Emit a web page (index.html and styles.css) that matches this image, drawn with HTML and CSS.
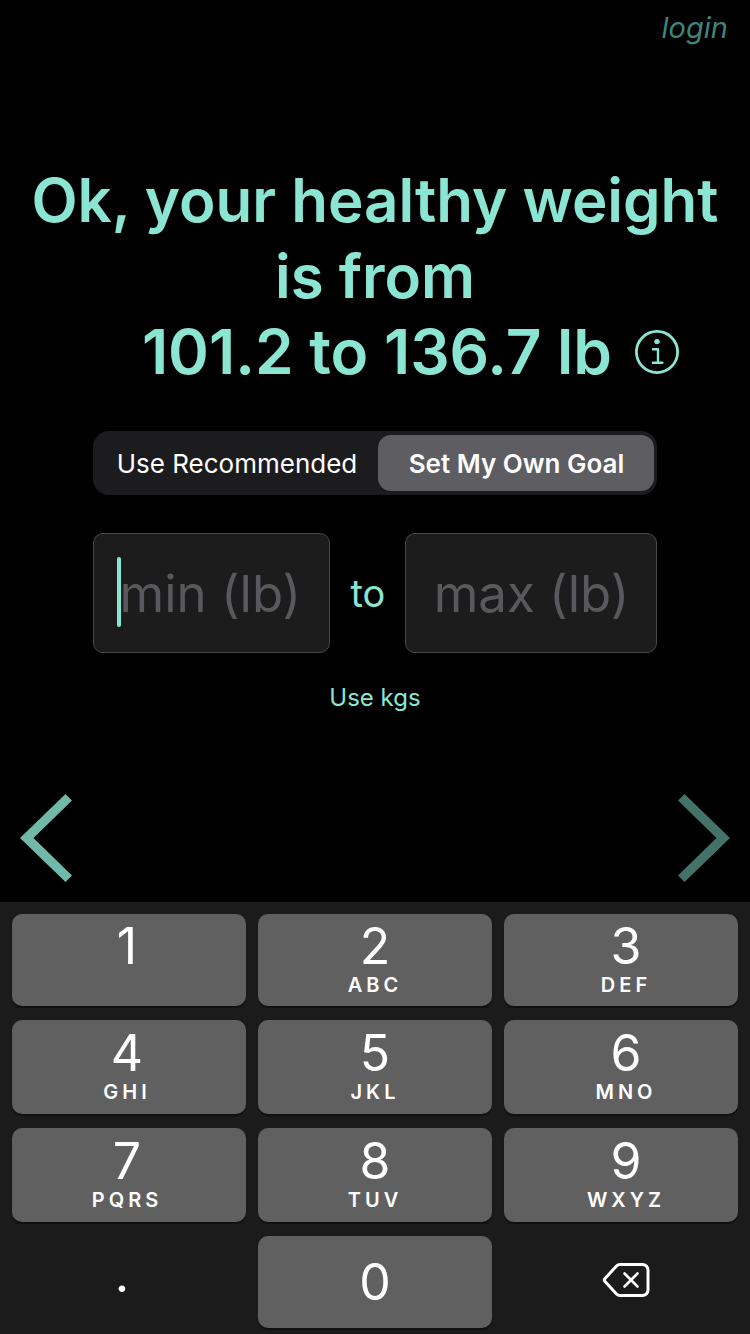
FILE: index.html
```html
<!DOCTYPE html>
<html lang="en">
<head>
<meta charset="utf-8">
<meta name="viewport" content="width=device-width, initial-scale=1">
<title>Weight goal</title>
<link rel="stylesheet" href="styles.css">
</head>
<body>
<div class="screen">
  <header class="topbar"><a class="login" href="#">login</a></header>
  <main class="content">
    <h1 class="title">Ok, your healthy weight<br>is from
      <span class="range">101.2 to 136.7 lb
        <button class="info" type="button" aria-label="Information">
          <svg viewBox="0 0 46 46" width="46" height="46" fill="none" stroke="currentColor" stroke-width="2.8"><circle cx="23" cy="23" r="20.6"/><circle cx="23" cy="12.6" r="2.7" fill="currentColor" stroke="none"/><path d="M19 20.200h5V33M18.800 33.800h9.600" stroke-width="2.400" stroke-linecap="round" stroke-linejoin="round"/></svg>
        </button>
      </span>
    </h1>
    <div class="segments">
      <button class="segment" type="button">Use Recommended</button>
      <button class="segment selected" type="button">Set My Own Goal</button>
    </div>
    <form class="goal">
      <input class="field min" type="text" placeholder="min (lb)" aria-label="Minimum weight in pounds">
      <span class="to">to</span>
      <input class="field max" type="text" placeholder="max (lb)" aria-label="Maximum weight in pounds">
      <span class="caret"></span>
    </form>
    <button class="units" type="button">Use kgs</button>
  </main>
  <nav class="pager">
    <button class="arrow" type="button" aria-label="Back"><svg viewBox="0 0 52 88" width="52" height="88" fill="currentColor"><path d="M45.500 0 52 6.500 13.500 44 52 81.500 45.500 88 0 44Z"/></svg></button>
    <button class="arrow next" type="button" aria-label="Next"><svg viewBox="0 0 52 88" width="52" height="88" fill="currentColor"><path d="M6.500 0 0 6.500 38.500 44 0 81.500 6.500 88 52 44Z"/></svg></button>
  </nav>
  <div class="keypad">
    <button class="key left" type="button"><span class="digit">1</span><span class="letters"></span></button>
    <button class="key" type="button"><span class="digit">2</span><span class="letters">ABC</span></button>
    <button class="key right" type="button"><span class="digit">3</span><span class="letters">DEF</span></button>
    <button class="key left" type="button"><span class="digit">4</span><span class="letters">GHI</span></button>
    <button class="key" type="button"><span class="digit">5</span><span class="letters">JKL</span></button>
    <button class="key right" type="button"><span class="digit">6</span><span class="letters">MNO</span></button>
    <button class="key left" type="button"><span class="digit">7</span><span class="letters">PQRS</span></button>
    <button class="key" type="button"><span class="digit">8</span><span class="letters">TUV</span></button>
    <button class="key right" type="button"><span class="digit">9</span><span class="letters">WXYZ</span></button>
    <button class="key plain point" type="button"><span class="digit">.</span></button>
    <button class="key" type="button"><span class="digit">0</span></button>
    <button class="key plain delete" type="button" aria-label="Delete"><svg viewBox="0 0 48 36" width="48" height="36" fill="none" stroke="currentColor" stroke-width="3" stroke-linejoin="round" stroke-linecap="round"><path d="M18 2.500h22.500a5.500 5.500 0 0 1 5.500 5.500v20a5.500 5.500 0 0 1-5.500 5.500H18q-2 0-3.500-1.500L3 19.500q-1.500-1.500 0-3L14.500 4Q16 2.500 18 2.500Z"/><path d="m22.500 11.500 13 13M35.500 11.500l-13 13" stroke-width="2.600"/></svg></button>
  </div>
</div>
</body>
</html>
```
FILE: styles.css
```css
* { box-sizing: border-box; }
body { margin: 0; background: #000; color: #8ae6d3; font-family: Inter, "Liberation Sans", sans-serif; }
button { margin: 0; padding: 0; border: 0; background: none; color: inherit; font: inherit; }
.screen { min-height: 100vh; display: flex; flex-direction: column; }
.topbar { display: flex; justify-content: flex-end; padding: 10px 22px 0; }
.login { color: #3f837d; font-size: 29px; line-height: 36px; font-style: italic; text-decoration: none; }
.content { display: flex; flex-direction: column; align-items: center; padding-top: 116px; }
.title { width: 100%; margin: 0; font-size: 60px; line-height: 76px; font-weight: 600; text-align: center; white-space: nowrap; }
.range { display: flex; align-items: center; justify-content: flex-end; gap: 22px; padding-right: 70px; font-size: 62px; }
.info { display: flex; }
.segments { display: grid; grid-template-columns: 283fr 276fr; width: 75.333%; height: 64px; margin-top: 41px; padding: 4px 3px; border-radius: 16px; background: #1c1c1e; color: #fff; font-size: 26px; }
.segment { border-radius: 13px; }
.selected { background: #5d5d62; font-weight: 600; }
.goal { position: relative; display: grid; grid-template-columns: 238fr 75fr 252fr; width: 75.333%; margin-top: 38px; }
.field { width: 100%; min-width: 0; height: 120px; padding: 0 26px; border: 1px solid #48484a; border-radius: 10px; background: #1c1c1c; color: #8ae6d3; font: 51px Inter, "Liberation Sans", sans-serif; outline: 0; }
.max { text-align: center; }
.field::placeholder { color: #59595d; opacity: 1; }
.to { align-self: center; text-align: center; font-size: 38px; }
.caret { position: absolute; left: 24px; top: 24px; width: 4px; height: 70px; border-radius: 2px; background: #8ae6d3; }
.units { margin-top: 30px; font-size: 24px; line-height: 30px; }
.pager { display: flex; justify-content: space-between; margin-top: auto; padding: 0 20px 20px; }
.arrow { display: flex; color: #70b9aa; }
.next { color: #437269; }
.keypad { display: grid; grid-template-columns: repeat(3, 1fr); grid-template-rows: 92px 94px 94px 92px; gap: 14px 12px; padding: 12px 12px 6px; background: #1b1b1b; color: #fff; }
.key { display: flex; flex-direction: column; align-items: center; justify-content: center; border-radius: 10px; background: #606060; box-shadow: 0 2px 1px #101010; }
.left { padding-right: 4px; }
.right { padding-left: 10px; }
.digit { font-size: 50px; line-height: 50px; }
.letters { height: 28px; font-size: 20px; line-height: 28px; font-weight: 600; letter-spacing: 4px; }
.plain { background: none; box-shadow: none; }
.point { padding: 0 14px 16px 0; }
.delete { padding: 0 0 4px 10px; }
```
